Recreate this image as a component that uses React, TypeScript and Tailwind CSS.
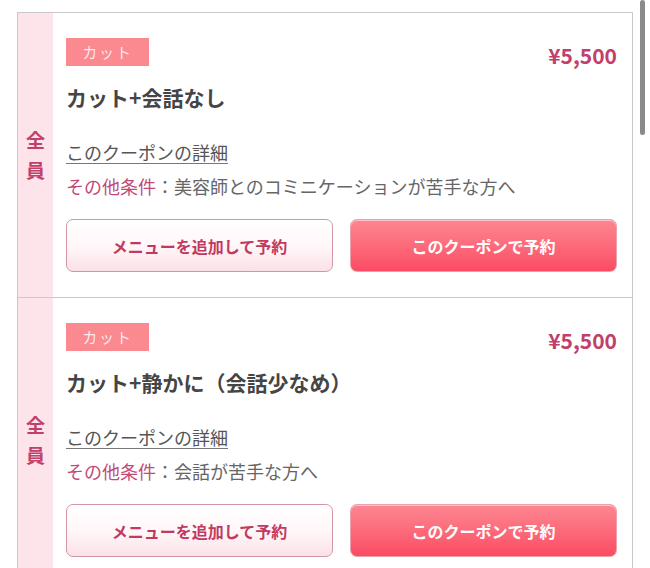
const coupons = [
  {
    tag: 'カット',
    price: '¥5,500',
    title: 'カット+会話なし',
    cond: '美容師とのコミニケーションが苦手な方へ',
  },
  {
    tag: 'カット',
    price: '¥5,500',
    title: 'カット+静かに（会話少なめ）',
    cond: '会話が苦手な方へ',
  },
]

function CouponRow({ c, last }: { c: (typeof coupons)[number]; last: boolean }) {
  return (
    <div className={`flex ${last ? '' : 'border-b border-[#c9c9c9]'}`}>
      {/* target strip */}
      <div className="w-[35px] shrink-0 bg-[#fde3ea] flex flex-col items-center justify-center text-[19px] leading-[30px] font-bold text-[#c0406a]">
        <span>全</span>
        <span>員</span>
      </div>

      <div className="flex-1 pl-[13px] pr-[15px] pt-[25px] pb-[25px]">
        <div className="flex justify-between items-start">
          <div>
            <span className="inline-flex items-center justify-center w-[83px] h-[28px] bg-[#fa8990] text-[#fde8ea] text-[15px] tracking-[0.12em]">
              {c.tag}
            </span>
            <h2 className="mt-[16px] text-[21px] leading-[30px] font-bold text-[#454545]">{c.title}</h2>
          </div>
          <p className="mt-[3px] text-[21px] leading-[28px] font-bold text-[#c13f6a]">{c.price}</p>
        </div>

        <a className="block mt-[26px] text-[18px] leading-[28px] text-[#555] underline underline-offset-[3px] decoration-[#777]">
          このクーポンの詳細
        </a>
        <p className="mt-[6px] text-[18px] leading-[28px] text-[#666]">
          <span className="text-[#c24a78]">その他条件</span>：{c.cond}
        </p>

        <div className="mt-[19px] grid grid-cols-2 gap-[17px]">
          <button className="h-[53px] rounded-[7px] border border-[#d596a4] bg-gradient-to-b from-white via-[#fff7f9] to-[#fbe1e7] text-[16px] font-bold text-[#c2395f] shadow-[inset_0_1px_0_#fff]">
            メニューを追加して予約
          </button>
          <button className="h-[53px] rounded-[7px] border border-[#e9a3ab] bg-gradient-to-b from-[#fc8692] to-[#fb4a63] text-[16px] font-bold text-white shadow-[inset_0_1px_0_rgba(255,255,255,0.5)]">
            このクーポンで予約
          </button>
        </div>
      </div>
    </div>
  )
}

export default function App() {
  return (
    <div
      className="relative min-h-[568px] bg-white pt-[12px] pl-[17px] pr-[17px] overflow-hidden"
      style={{ fontFamily: '"Noto Sans CJK JP", "Noto Sans", sans-serif' }}
    >
      <div className="border border-[#c9c9c9] border-b-0">
        {coupons.map((c, i) => (
          <CouponRow key={i} c={c} last={i === coupons.length - 1} />
        ))}
      </div>
      {/* scrollbar indicator */}
      <div className="absolute right-[5px] top-0 w-[5px] h-[135px] rounded-full bg-[#8a8a8a]" />
    </div>
  )
}
